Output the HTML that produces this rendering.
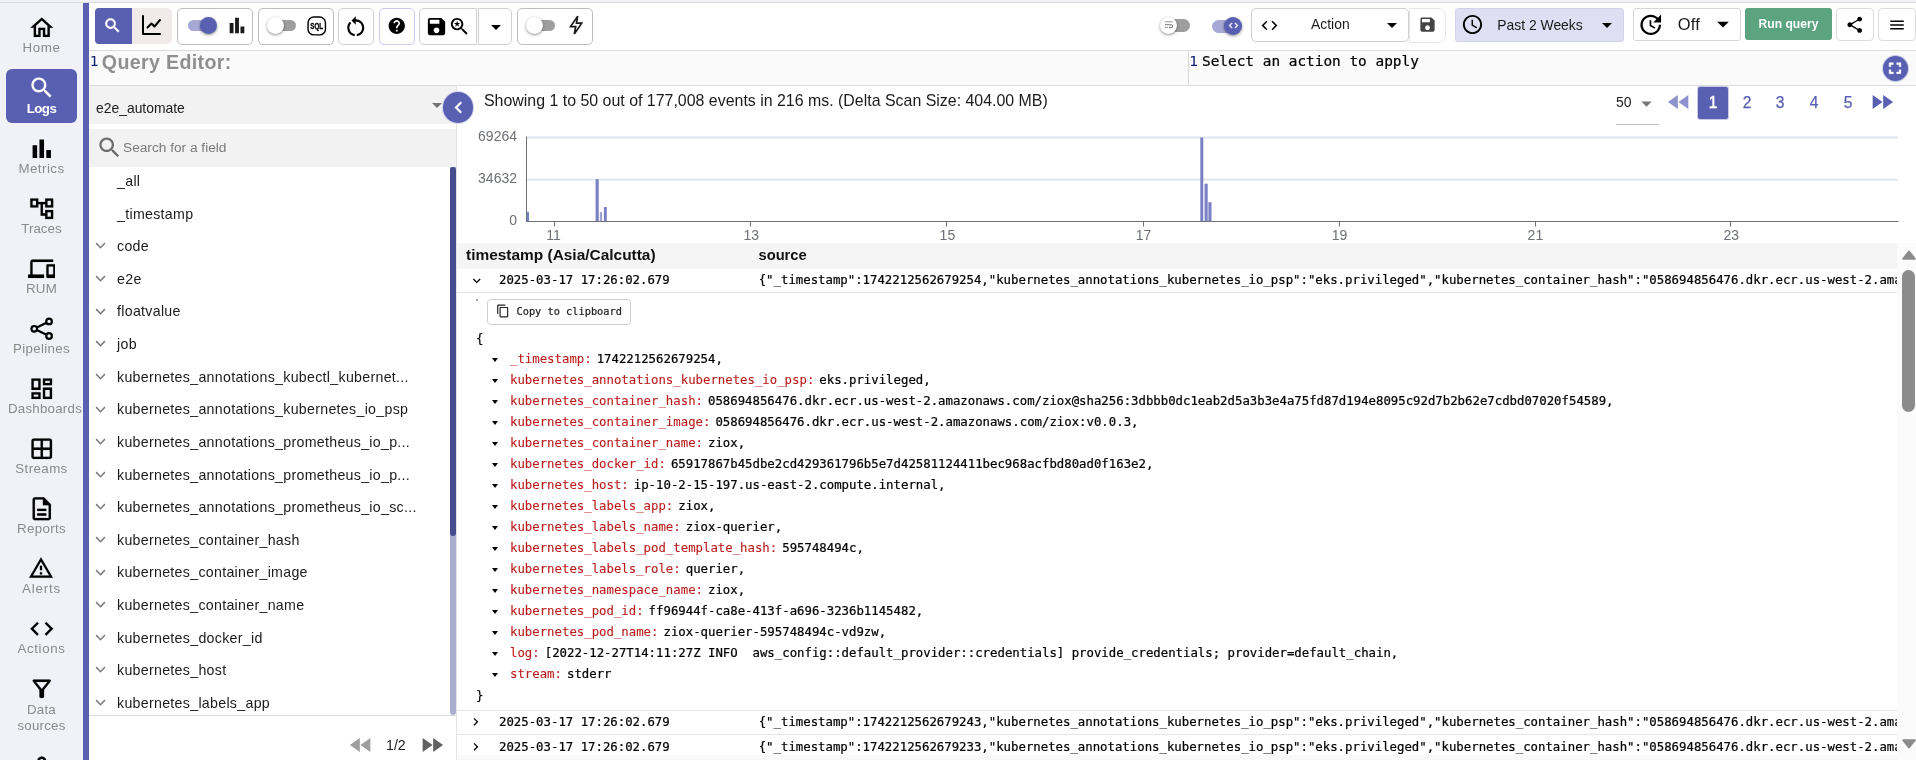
<!DOCTYPE html>
<html lang="en">
<head>
<meta charset="utf-8">
<title>Logs</title>
<style>
*{box-sizing:border-box;margin:0;padding:0}
html,body{width:1916px;height:760px;overflow:hidden;background:#fff}
body{font-family:"Liberation Sans",sans-serif;color:#1b1b1b;position:relative;font-size:14px;will-change:transform}
.abs{position:absolute}
svg{display:block}
#topstrip{position:absolute;left:0;top:0;width:1916px;height:3px;background:#f1f2f8;border-bottom:1px solid #dcdcdf}
/* ---------- sidebar ---------- */
#side{position:absolute;left:0;top:3px;width:83px;height:757px;background:#f1f2f8}
#rail{position:absolute;left:83px;top:3px;width:6px;height:757px;background:#5960b2}
.nav{position:absolute;left:0;width:83px;height:56px;text-align:center;color:#8a8a8a}
.nav svg{position:absolute;left:27.650px;top:-1.350px;width:27.500px;height:27.500px;fill:#000;stroke:#000;stroke-width:.12}
.nav span{position:absolute;left:0;width:83px;top:24.300px;font-size:13.300px;line-height:18px;letter-spacing:.15px}
.nav.act{left:6px;width:71px;height:54px;background:#5960b2;border-radius:6px;color:#fff}
.nav.act svg{fill:#fff;stroke:#fff;left:21.650px;top:4.850px}
.nav.act span{left:0;width:71px;top:30.900px;font-weight:bold}
/* ---------- toolbar ---------- */
#tb{position:absolute;left:89px;top:3px;width:1827px;height:48px;background:#fff;border-bottom:1px solid #dcdcdc}
.box{position:absolute;top:5px;height:37px;border:1px solid #bdbdbd;border-radius:5px;background:#fff}
.box svg{position:absolute}
.tg{position:absolute;height:11px;border-radius:5.500px;background:#9e9e9e}
.tg i{position:absolute;top:-3px;width:17px;height:17px;border-radius:50%;background:#fff;box-shadow:0 1px 3px rgba(0,0,0,.45)}
.tg.on{background:#a6a9d6}
.tg.on i{background:#5960b2}

/* ---------- editor row ---------- */
#ed{position:absolute;left:89px;top:51px;width:1827px;height:34px;background:#fafafa}
#edb{position:absolute;left:89px;top:85px;width:1827px;height:1px;background:#dcdcdc}
.ln{position:absolute;font-family:"DejaVu Sans Mono","Liberation Mono",monospace;font-size:14.420px;color:#0b216f;line-height:16px}
/* ---------- left field panel ---------- */
#lp{position:absolute;left:89px;top:86px;width:367px;height:674px;background:#fff}
#vdiv{position:absolute;left:456px;top:86px;width:1px;height:674px;background:#e4e4e4}
.frow{position:absolute;left:0;width:360px;height:20px;font-size:14.200px;line-height:20px;white-space:nowrap;color:#1b1b1b}
.frow svg{position:absolute;left:5.700px;top:5.200px;width:11px;height:9.200px;fill:none;stroke:#7a7a7a;stroke-width:1.600}
.frow span{position:absolute;left:28px;top:0;letter-spacing:.3px}
/* ---------- results ---------- */
#rp{position:absolute;left:457px;top:86px;width:1459px;height:674px;background:#fff;overflow:hidden}
.mono{font-family:"DejaVu Sans Mono","Liberation Mono",monospace;font-size:12.345px;white-space:pre;color:#000;-webkit-text-stroke:.22px}
.pg{position:absolute;top:0;height:34px;line-height:34px;font-size:15.600px;color:#5960b2;text-align:center;width:32px;-webkit-text-stroke:.25px}
.lrow{position:absolute;left:0;width:1440px;height:24px;overflow:hidden}
.lrow .ts{position:absolute;left:42px;top:0;line-height:24px}
.lrow .src{position:absolute;left:301.700px;top:0;line-height:24px}
.jr{position:absolute;left:35px;height:21px;line-height:21px}
.jr b{font-weight:normal;color:#bb1e1e;-webkit-text-stroke:.12px}
.jr i{font-style:normal;margin-left:5px}
.jr:before{content:"";position:absolute;left:0;top:9px;border-left:3px solid transparent;border-right:3px solid transparent;border-top:4px solid #000}
.jr b,.jr i{position:relative;left:18px}
</style>
</head>
<body>
<div id="topstrip"></div>
<div id="side">
  <div class="nav" style="top:12.20px"><svg viewBox="0 0 24 24"><path d="M12 5.69l5 4.5V18h-2v-6H9v6H7v-7.81l5-4.5M12 3L2 12h3v8h6v-6h2v6h6v-8h3L12 3z"/></svg><span style="letter-spacing:0.60px">Home</span></div>
  <div class="nav act" style="top:66.1px"><svg viewBox="0 0 24 24"><path d="M15.5 14h-.79l-.28-.27C15.41 12.59 16 11.11 16 9.5 16 5.91 13.09 3 9.5 3S3 5.91 3 9.5 5.91 16 9.5 16c1.61 0 3.09-.59 4.23-1.57l.27.28v.79l5 4.99L20.49 19l-4.99-5zm-6 0C7.01 14 5 11.99 5 9.5S7.01 5 9.5 5 14 7.01 14 9.5 11.99 14 9.5 14z"/></svg><span style="letter-spacing:-0.55px">Logs</span></div>
  <div class="nav" style="top:133.05px"><svg viewBox="0 0 24 24"><path stroke="none" d="M4 9h4v11H4zm12 4h4v7h-4zm-6-9h4v16h-4z"/></svg><span style="letter-spacing:0.45px">Metrics</span></div>
  <div class="nav" style="top:193.05px"><svg viewBox="0 0 24 24"><path d="M22 11V3h-7v3H9V3H2v8h7V8h2v10h4v3h7v-8h-7v3h-2V8h2v3h7zM7 9H4V5h3v4zm10 6h3v4h-3v-4zm0-10h3v4h-3V5z"/></svg><span style="letter-spacing:0.05px">Traces</span></div>
  <div class="nav" style="top:253.05px"><svg viewBox="0 0 24 24"><path d="M4 6h18V4H4c-1.1 0-2 .9-2 2v11H0v3h14v-3H4V6zm19 2h-6c-.55 0-1 .45-1 1v10c0 .55.45 1 1 1h6c.55 0 1-.45 1-1V9c0-.55-.45-1-1-1zm-1 9h-4v-7h4v7z"/></svg><span style="letter-spacing:0.20px">RUM</span></div>
  <div class="nav" style="top:313.05px"><svg viewBox="0 0 27.500 27.500" style="fill:none;stroke:#000;stroke-width:2.200"><circle cx="21.050" cy="6.400" r="2.800"/><circle cx="6.250" cy="13.800" r="2.800"/><circle cx="21.050" cy="21" r="2.800"/><path d="M8.800 12.500L18.500 7.700M8.800 15.100L18.500 19.700"/></svg><span style="letter-spacing:0.35px">Pipelines</span></div>
  <div class="nav" style="top:373.05px"><svg viewBox="0 0 24 24"><path d="M19 5v2h-4V5h4M9 5v6H5V5h4m10 8v6h-4v-6h4M9 17v2H5v-2h4M21 3h-8v6h8V3zM11 3H3v10h8V3zm10 8h-8v10h8V11zm-10 4H3v6h8v-6z"/></svg><span style="left:3.500px;letter-spacing:.25px">Dashboards</span></div>
  <div class="nav" style="top:433.05px"><svg viewBox="0 0 24 24"><path d="M19 3H5c-1.100 0-2 .9-2 2v14c0 1.100.9 2 2 2h14c1.100 0 2-.9 2-2V5c0-1.100-.9-2-2-2zm0 8h-6V5h6v6zm-8-6v6H5V5h6zm-6 8h6v6H5v-6zm8 6v-6h6v6h-6z"/></svg><span style="letter-spacing:0.40px">Streams</span></div>
  <div class="nav" style="top:493.05px"><svg viewBox="0 0 24 24"><path d="M8 16h8v2H8zm0-4h8v2H8zm6-10H6c-1.1 0-2 .9-2 2v16c0 1.1.89 2 1.99 2H18c1.1 0 2-.9 2-2V8l-6-6zm4 18H6V4h7v5h5v11z"/></svg><span style="letter-spacing:0.35px">Reports</span></div>
  <div class="nav" style="top:553.05px"><svg viewBox="0 0 24 24" style="left:28.400px;top:-0.600px;width:26px;height:26px"><path d="M12 5.990L19.530 19H4.470L12 5.990M12 2L1 21h22L12 2zm1 14h-2v2h2v-2zm0-6h-2v4h2v-4z"/></svg><span style="letter-spacing:0.80px">Alerts</span></div>
  <div class="nav" style="top:613.05px"><svg viewBox="0 0 24 24"><path d="M9.4 16.6L4.8 12l4.6-4.6L8 6l-6 6 6 6 1.4-1.4zm5.2 0l4.6-4.6-4.6-4.6L16 6l6 6-6 6-1.4-1.4z"/></svg><span style="letter-spacing:0.65px">Actions</span></div>
  <div class="nav" style="top:673.05px"><svg viewBox="0 0 24 24"><path d="M7 6h10l-5.01 6.3L7 6zm-2.75-.39C6.27 8.2 10 13 10 13v6c0 .55.45 1 1 1h2c.55 0 1-.45 1-1v-6s3.72-4.8 5.74-7.39c.51-.66.04-1.61-.79-1.61H5.04c-.83 0-1.3.95-.79 1.61z"/></svg><span style="line-height:16px;top:26.100px;letter-spacing:.2px">Data<br>sources</span></div>
  <div class="nav" style="top:750.80px"><svg viewBox="0 0 24 24"><path d="M12 6c1.1 0 2 .9 2 2s-.9 2-2 2-2-.9-2-2 .9-2 2-2m0 10c2.7 0 5.8 1.29 6 2H6c.23-.72 3.31-2 6-2m0-12C9.79 4 8 5.790 8 8s1.79 4 4 4 4-1.79 4-4-1.79-4-4-4zm0 10c-2.67 0-8 1.34-8 4v2h16v-2c0-2.660-5.33-4-8-4z"/></svg></div>
</div>
<div id="rail"></div>

<div id="tb">
  <!-- search / visualize toggle -->
  <div class="abs" style="left:6px;top:5px;width:37px;height:36px;background:#5960b2;border-radius:4px 0 0 4px"><svg viewBox="0 0 24 24" style="position:absolute;left:8.300px;top:8px;width:19px;height:19px;fill:#fff;stroke:#fff;stroke-width:.7"><path d="M15.5 14h-.79l-.28-.27C15.41 12.59 16 11.11 16 9.5 16 5.91 13.09 3 9.500 3S3 5.91 3 9.5 5.91 16 9.5 16c1.61 0 3.09-.59 4.23-1.57l.27.28v.79l5 4.99L20.49 19l-4.99-5zm-6 0C7.01 14 5 11.99 5 9.5S7.01 5 9.5 5 14 7.01 14 9.5 11.99 14 9.5 14z"/></svg></div>
  <div class="abs" style="left:43px;top:5px;width:40px;height:36px;background:#f0eaea;border-radius:0 5px 5px 0"><svg viewBox="0 0 24 24" style="position:absolute;left:8px;top:5.400px;width:24px;height:24px;fill:none;stroke:#000;stroke-width:2;stroke-linecap:round;stroke-linejoin:round"><path d="M3 3v18h17"/><path d="M7.500 14.500l4-4 3 3 5.500-6.500"/></svg></div>
  <!-- histogram toggle -->
  <div class="box" style="left:88px;width:76px">
    <div class="tg on" style="left:10px;top:11px;width:28px"><i style="right:-1px"></i></div>
    <svg viewBox="0 0 24 24" preserveAspectRatio="none" style="left:47.500px;top:5px;width:22px;height:23px;fill:#1b1b1b"><path d="M4 9.500h4.200V20H4zM9.900 4h4.200v16H9.900zM15.800 13H20v7h-4.200z"/></svg>
  </div>
  <!-- sql toggle -->
  <div class="box" style="left:169px;width:76px">
    <div class="tg" style="left:9px;top:11px;width:28px"><i style="left:-1px"></i></div>
    <svg viewBox="0 0 24 24" style="left:46.800px;top:5.800px;width:21.500px;height:20.800px" preserveAspectRatio="none"><rect x="2.300" y="2.300" width="19.400" height="20.600" rx="6.500" fill="none" stroke="#000" stroke-width="1.600"/><text x="12" y="16.300" text-anchor="middle" font-family="Liberation Sans, sans-serif" font-weight="bold" font-size="9.700" stroke="#000" stroke-width=".35" textLength="14.400" lengthAdjust="spacingAndGlyphs" fill="#000">SQL</text></svg>
  </div>
  <!-- reset -->
  <div class="box" style="left:249px;width:36px;border-color:#d0d0d0">
    <svg viewBox="0 0 24 24" style="left:4.450px;top:4.860px;width:25.500px;height:25.500px;fill:#000"><path d="M12 5V2L8 6l4 4V7c3.310 0 6 2.690 6 6 0 2.970-2.170 5.430-5 5.910v2.020c3.950-.49 7-3.850 7-7.930 0-4.420-3.580-8-8-8zM6 13c0-1.650.67-3.150 1.760-4.240L6.340 7.340C4.900 8.790 4 10.790 4 13c0 4.080 3.050 7.440 7 7.930v-2.020c-2.830-.48-5-2.940-5-5.910z"/></svg>
  </div>
  <!-- help -->
  <div class="box" style="left:290px;width:36px;border-color:#c9cbee">
    <svg viewBox="0 0 24 24" style="left:7.300px;top:6.850px;width:19.500px;height:19.500px;fill:#000"><path d="M12 2C6.480 2 2 6.480 2 12s4.480 10 10 10 10-4.480 10-10S17.520 2 12 2zm1 17h-2v-2h2v2zm2.070-7.750l-.9.920C13.450 12.900 13 13.500 13 15h-2v-.5c0-1.100.45-2.100 1.170-2.830l1.240-1.260c.37-.36.59-.86.59-1.410 0-1.100-.9-2-2-2s-2 .9-2 2H8c0-2.210 1.790-4 4-4s4 1.790 4 4c0 .88-.36 1.680-.93 2.250z"/></svg>
  </div>
  <!-- saved views -->
  <div class="box" style="left:330px;width:58px;border-color:#d0d0d0;border-radius:5px 0 0 5px">
    <svg viewBox="0 0 24 24" style="left:5.200px;top:6px;width:23px;height:23px;fill:#000"><path d="M17 3H5c-1.110 0-2 .9-2 2v14c0 1.100.89 2 2 2h14c1.100 0 2-.9 2-2V7l-4-4zm-5 16c-1.660 0-3-1.340-3-3s1.340-3 3-3 3 1.340 3 3-1.340 3-3 3zm3-10H5V5h10v4z"/></svg>
    <svg viewBox="0 0 24 24" style="left:27.850px;top:5.850px;width:23px;height:23px;fill:#000"><path d="M15.500 14h-.79l-.28-.27C15.410 12.590 16 11.110 16 9.500 16 5.910 13.090 3 9.500 3S3 5.910 3 9.500 5.910 16 9.500 16c1.610 0 3.090-.59 4.230-1.570l.27.280v.79l5 4.990L20.490 19l-4.990-5zm-6 0C7.010 14 5 11.990 5 9.500S7.010 5 9.500 5 14 7.010 14 9.500 11.990 14 9.500 14z"/><path d="M10.290 8.440L9.500 6l-.79 2.440H6.250l2.010 1.430-.77 2.370 2.010-1.460 2.010 1.460-.77-2.370 2.010-1.430z"/></svg>
  </div>
  <div class="box" style="left:389px;width:34px;border-color:#d0d0d0;border-radius:0 5px 5px 0">
    <svg viewBox="0 0 24 24" style="left:5px;top:6px;width:24px;height:24px;fill:#000"><path d="M7 10l5 5 5-5z"/></svg>
  </div>
  <!-- quick mode -->
  <div class="box" style="left:428px;width:76px">
    <div class="tg" style="left:9px;top:11px;width:28px"><i style="left:-1px"></i></div>
    <svg viewBox="0 0 24 24" style="left:45.800px;top:4.300px;width:24px;height:24px;fill:none;stroke:#1b1b1b;stroke-width:1.700;stroke-linejoin:miter"><path d="M13.700 3.200L6.500 13.600h5.200L10.300 21l7.400-10.800h-5.200z"/></svg>
  </div>

  <!-- right side -->
  <div class="tg" style="left:1072px;top:15.700px;width:29px;height:13px;border-radius:7px"><i style="left:-1px;top:-2px"></i></div>
  <svg class="abs" viewBox="0 0 24 24" style="left:1073.500px;top:15.800px;width:11.500px;height:11.500px;fill:#707070"><path d="M4 19h6v-2H4v2zM20 5H4v2h16V5zm-3 6H4v2h13.250c1.100 0 2 .9 2 2s-.9 2-2 2H15v-2l-3 3 3 3v-2h2c2.210 0 4-1.790 4-4s-1.790-4-4-4z"/></svg>
  <div class="tg on" style="left:1123px;top:16.500px;width:28px;height:13px;border-radius:7px"><i style="right:-2px;top:-2.500px;width:18px;height:18px"></i></div>
  <svg class="abs" viewBox="0 0 24 24" style="left:1138.500px;top:16.800px;width:11px;height:11px;fill:#fff;stroke:#fff;stroke-width:.8"><path d="M9.400 16.600L4.800 12l4.600-4.600L8 6l-6 6 6 6 1.400-1.400zm5.200 0l4.600-4.600-4.600-4.600L16 6l6 6-6 6-1.400-1.400z"/></svg>

  <div class="box" style="left:1162px;width:158px;height:34px;border-color:#cfcfcf">
    <svg viewBox="0 0 24 24" style="left:8px;top:7px;width:19px;height:19px;fill:#000"><path d="M9.400 16.600L4.800 12l4.600-4.600L8 6l-6 6 6 6 1.400-1.400zm5.200 0l4.600-4.600-4.600-4.600L16 6l6 6-6 6-1.400-1.400z"/></svg>
    <span class="abs" id="t_action" style="left:59px;top:7.100px;font-size:13.900px;line-height:16px">Action</span>
    <svg viewBox="0 0 24 24" style="left:128px;top:4px;width:24px;height:24px;fill:#000"><path d="M7 10l5 5 5-5z"/></svg>
  </div>
  <div class="box" style="left:1320px;width:37px;height:35px;border-color:#e6e6e6;border-radius:0 8px 8px 0">
    <svg viewBox="0 0 24 24" style="left:7.800px;top:5.800px;width:19px;height:19px;fill:#444"><path d="M17 3H5c-1.110 0-2 .9-2 2v14c0 1.100.89 2 2 2h14c1.100 0 2-.9 2-2V7l-4-4zm-5 16c-1.660 0-3-1.340-3-3s1.340-3 3-3 3 1.340 3 3-1.340 3-3 3zm3-10H5V5h10v4z"/></svg>
  </div>

  <div class="box" style="left:1366px;width:169px;height:34px;background:#dedff2;border-color:#d2d3ea;border-radius:3px">
    <svg viewBox="0 0 24 24" style="left:5.100px;top:4px;width:23px;height:23px;fill:#000"><path d="M11.990 2C6.470 2 2 6.480 2 12s4.470 10 9.990 10C17.520 22 22 17.520 22 12S17.520 2 11.990 2zM12 20c-4.420 0-8-3.580-8-8s3.580-8 8-8 8 3.580 8 8-3.580 8-8 8zm.5-13H11v6l5.250 3.150.75-1.230-4.500-2.670z"/></svg>
    <span class="abs" id="t_past" style="left:41.300px;top:7.500px;font-size:13.900px;line-height:16px">Past 2 Weeks</span>
    <svg viewBox="0 0 24 24" style="left:139px;top:4px;width:24px;height:24px;fill:#000"><path d="M7 10l5 5 5-5z"/></svg>
  </div>

  <div class="box" style="left:1544px;width:108px;height:33px;border-color:#d6d6d6;border-radius:3px">
    <svg viewBox="0 0 24 24" style="left:3.400px;top:1.700px;width:27.500px;height:27.500px;fill:#000"><path d="M21 10.120h-6.780l2.740-2.820c-2.730-2.700-7.150-2.800-9.880-.1-2.730 2.710-2.730 7.080 0 9.790s7.150 2.710 9.880 0C18.320 15.650 19 14.080 19 12.100h2c0 1.980-.88 4.550-2.640 6.290-3.510 3.480-9.210 3.480-12.720 0-3.500-3.470-3.530-9.110-.02-12.580s9.140-3.470 12.650 0L21 3v7.120zM12.500 8v4.250l3.500 2.080-.72 1.210L11 13V8h1.500z"/></svg>
    <span class="abs" id="t_off" style="left:43.700px;top:6.100px;font-size:16.500px;letter-spacing:.2px;line-height:18px">Off</span>
    <svg viewBox="0 0 24 24" style="left:74.700px;top:0.900px;width:28px;height:28px;fill:#000"><path d="M7 10l5 5 5-5z"/></svg>
  </div>

  <div class="abs" style="left:1656px;top:5px;width:87px;height:32px;background:#5ca380;border-radius:3px;color:#fff;font-weight:bold;font-size:12.100px;line-height:32px;text-align:center" id="t_run">Run query</div>

  <div class="box" style="left:1747px;width:38px;height:33px;border-color:#dcdcdc;border-radius:4px">
    <svg viewBox="0 0 24 24" style="left:8.300px;top:5.700px;width:19.500px;height:19.500px;fill:#000"><path d="M18 16.080c-.76 0-1.440.3-1.960.77L8.910 12.700c.05-.23.09-.46.09-.7s-.04-.47-.09-.7l7.050-4.110c.54.5 1.250.81 2.040.81 1.660 0 3-1.340 3-3s-1.340-3-3-3-3 1.340-3 3c0 .24.04.47.09.7L8.040 9.810C7.500 9.310 6.790 9 6 9c-1.660 0-3 1.340-3 3s1.340 3 3 3c.79 0 1.500-.31 2.040-.81l7.120 4.160c-.05.21-.08.43-.08.65 0 1.610 1.310 2.920 2.920 2.920 1.610 0 2.920-1.310 2.920-2.920s-1.310-2.920-2.920-2.920z"/></svg>
  </div>
  <div class="box" style="left:1789px;width:38px;height:33px;border-color:#dcdcdc;border-radius:4px">
    <svg viewBox="0 0 24 24" style="left:9px;top:7px;width:18px;height:18px;fill:#000"><path d="M3 18h18v-2H3v2zm0-5h18v-2H3v2zm0-7v2h18V6H3z"/></svg>
  </div>
</div>

<div id="ed">
  <span class="ln" style="left:0.800px;top:2.300px">1</span>
  <span class="abs" id="t_qe" style="left:12.800px;top:-0.200px;font-size:19.600px;letter-spacing:.35px;line-height:22px;font-weight:bold;color:#8f8f8f;white-space:nowrap">Query Editor:</span>
  <div class="abs" style="left:1099px;top:0;width:1px;height:34px;background:#d8d8d8"></div>
  <span class="ln" style="left:1100.300px;top:2.300px">1</span>
  <span class="abs mono" id="t_sel" style="left:1113px;top:2.300px;font-family:'DejaVu Sans Mono','Liberation Mono',monospace;font-size:14.420px;line-height:16px;color:#000">Select an action to apply</span>
  <div class="abs" style="left:1794px;top:4.700px;width:25px;height:25px;border-radius:50%;background:#5960b2;box-shadow:0 0 0 1px #c9cbe6"><svg viewBox="0 0 24 24" preserveAspectRatio="none" style="position:absolute;left:1.900px;top:3.300px;width:20px;height:18.500px;fill:#fff;stroke:#fff;stroke-width:.6"><path d="M7 14H5v5h5v-2H7v-3zm-2-4h2V7h3V5H5v5zm12 7h-3v2h5v-5h-2v3zM14 5v2h3v3h2V5h-5z"/></svg></div>
</div>
<div id="edb"></div>

<div id="lp">
  <div class="abs" style="left:0;top:0;width:367px;height:38px;background:#f2f2f2"></div>
  <span class="abs" id="t_stream" style="left:7px;top:12.500px;font-size:13.900px;line-height:18px;white-space:nowrap">e2e_automate</span>
  <svg class="abs" viewBox="0 0 24 24" style="left:336px;top:7px;width:24px;height:24px;fill:#757575"><path d="M7 10l5 5 5-5z"/></svg>
  <div class="abs" style="left:0;top:43px;width:367px;height:38px;background:#f2f2f2"></div>
  <svg class="abs" viewBox="0 0 24 24" style="left:7px;top:47.900px;width:27px;height:27px;fill:#6b6b6b"><path d="M15.500 14h-.79l-.28-.27C15.410 12.590 16 11.110 16 9.500 16 5.910 13.090 3 9.500 3S3 5.910 3 9.500 5.910 16 9.500 16c1.610 0 3.090-.59 4.230-1.570l.27.280v.79l5 4.990L20.490 19l-4.990-5zm-6 0C7.010 14 5 11.990 5 9.500S7.010 5 9.500 5 14 7.010 14 9.500 11.990 14 9.500 14z"/></svg>
  <span class="abs" id="t_search" style="left:34px;top:52.800px;font-size:13.700px;line-height:18px;color:#7b7b7b;white-space:nowrap">Search for a field</span>
  <div class="frow" style="top:85.01px"><span>_all</span></div>
  <div class="frow" style="top:117.63px"><span>_timestamp</span></div>
  <div class="frow" style="top:150.25px"><svg viewBox="0 0 12 10"><path d="M1.200 2.300L6 7.300l4.800-5"/></svg><span>code</span></div>
  <div class="frow" style="top:182.87px"><svg viewBox="0 0 12 10"><path d="M1.200 2.300L6 7.300l4.800-5"/></svg><span>e2e</span></div>
  <div class="frow" style="top:215.49px"><svg viewBox="0 0 12 10"><path d="M1.200 2.300L6 7.300l4.800-5"/></svg><span>floatvalue</span></div>
  <div class="frow" style="top:248.11px"><svg viewBox="0 0 12 10"><path d="M1.200 2.300L6 7.300l4.800-5"/></svg><span>job</span></div>
  <div class="frow" style="top:280.73px"><svg viewBox="0 0 12 10"><path d="M1.200 2.300L6 7.300l4.800-5"/></svg><span>kubernetes_annotations_kubectl_kubernet...</span></div>
  <div class="frow" style="top:313.35px"><svg viewBox="0 0 12 10"><path d="M1.200 2.300L6 7.300l4.800-5"/></svg><span>kubernetes_annotations_kubernetes_io_psp</span></div>
  <div class="frow" style="top:345.97px"><svg viewBox="0 0 12 10"><path d="M1.200 2.300L6 7.300l4.800-5"/></svg><span>kubernetes_annotations_prometheus_io_p...</span></div>
  <div class="frow" style="top:378.59px"><svg viewBox="0 0 12 10"><path d="M1.200 2.300L6 7.300l4.800-5"/></svg><span>kubernetes_annotations_prometheus_io_p...</span></div>
  <div class="frow" style="top:411.21px"><svg viewBox="0 0 12 10"><path d="M1.200 2.300L6 7.300l4.800-5"/></svg><span>kubernetes_annotations_prometheus_io_sc...</span></div>
  <div class="frow" style="top:443.83px"><svg viewBox="0 0 12 10"><path d="M1.200 2.300L6 7.300l4.800-5"/></svg><span>kubernetes_container_hash</span></div>
  <div class="frow" style="top:476.45px"><svg viewBox="0 0 12 10"><path d="M1.200 2.300L6 7.300l4.800-5"/></svg><span>kubernetes_container_image</span></div>
  <div class="frow" style="top:509.07px"><svg viewBox="0 0 12 10"><path d="M1.200 2.300L6 7.300l4.800-5"/></svg><span>kubernetes_container_name</span></div>
  <div class="frow" style="top:541.69px"><svg viewBox="0 0 12 10"><path d="M1.200 2.300L6 7.300l4.800-5"/></svg><span>kubernetes_docker_id</span></div>
  <div class="frow" style="top:574.31px"><svg viewBox="0 0 12 10"><path d="M1.200 2.300L6 7.300l4.800-5"/></svg><span>kubernetes_host</span></div>
  <div class="frow" style="top:606.93px"><svg viewBox="0 0 12 10"><path d="M1.200 2.300L6 7.300l4.800-5"/></svg><span>kubernetes_labels_app</span></div>
  <div class="abs" style="left:361px;top:81px;width:6px;height:548px;background:#acaed1;border-radius:0 0 3px 3px"></div>
  <div class="abs" style="left:361px;top:81px;width:6px;height:369px;background:#474c8e;border-radius:3px"></div>
  <div class="abs" style="left:0;top:629px;width:367px;height:1px;background:#dcdcdc"></div>
  <svg class="abs" viewBox="0 0 24 24" style="left:258.200px;top:645px;width:28px;height:28px;fill:#9e9e9e"><path d="M11 18V6l-8.500 6 8.500 6zm.5-6l8.500 6V6l-8.500 6z"/></svg>
  <span class="abs" id="t_12" style="left:297px;top:650px;font-size:14.200px;line-height:18px">1/2</span>
  <svg class="abs" viewBox="0 0 24 24" style="left:329px;top:645px;width:28px;height:28px;fill:#616161"><path d="M4 18l8.500-6L4 6v12zm9-12v12l8.500-6L13 6z"/></svg>
</div>
<div id="vdiv"></div>

<div id="rp">
  <span class="abs" id="t_show" style="left:27px;top:5px;font-size:15.930px;line-height:20px;white-space:nowrap;color:#1b1b1b">Showing 1 to 50 out of 177,008 events in 216 ms. (Delta Scan Size: 404.00 MB)</span>
  <!-- pagination -->
  <span class="abs" id="t_50" style="left:1159px;top:7px;font-size:14px;line-height:18px">50</span>
  <svg class="abs" viewBox="0 0 24 24" style="left:1176.500px;top:5px;width:25px;height:25px;fill:#757575"><path d="M7 10l5 5 5-5z"/></svg>
  <div class="abs" style="left:1159px;top:38px;width:43px;height:1px;background:#c2c2c2"></div>
  <svg class="abs" viewBox="0 0 24 24" style="left:1208px;top:2px;width:28px;height:28px;fill:#8d92cc"><path d="M11 18V6l-8.500 6 8.500 6zm.5-6l8.500 6V6l-8.500 6z"/></svg>
  <div class="pg" style="left:1241px;width:30px;background:#5960b2;color:#fff;border-radius:2px;box-shadow:0 0 0 1px #c9cbe6;top:1px;height:32px;line-height:32px;-webkit-text-stroke:.45px">1</div>
  <div class="pg" style="left:1274px">2</div>
  <div class="pg" style="left:1307px">3</div>
  <div class="pg" style="left:1341px">4</div>
  <div class="pg" style="left:1375px">5</div>
  <svg class="abs" viewBox="0 0 24 24" style="left:1411px;top:2px;width:28px;height:28px;fill:#5960b2"><path d="M4 18l8.500-6L4 6v12zm9-12v12l8.500-6L13 6z"/></svg>

  <!-- histogram -->
  <svg class="abs" style="left:0;top:40px;width:1459px;height:116px" viewBox="0 0 1459 116">
    <g font-family="Liberation Sans, sans-serif" font-size="14" fill="#6e7079">
      <text x="60" y="15" text-anchor="end">69264</text>
      <text x="60" y="57" text-anchor="end">34632</text>
      <text x="60" y="99" text-anchor="end">0</text>
      <text x="96.600" y="113.600" text-anchor="middle">11</text>
      <text x="294.300" y="113.600" text-anchor="middle">13</text>
      <text x="490.400" y="113.600" text-anchor="middle">15</text>
      <text x="686.500" y="113.600" text-anchor="middle">17</text>
      <text x="882.500" y="113.600" text-anchor="middle">19</text>
      <text x="1078.400" y="113.600" text-anchor="middle">21</text>
      <text x="1274.300" y="113.600" text-anchor="middle">23</text>
    </g>
    <g stroke="#dfe4f0" stroke-width="1.800"><path d="M69 11.500H1441M69 53.700H1441"/></g>
    <g fill="#7a80c4">
      <rect x="69.500" y="85.800" width="2.500" height="10"/>
      <rect x="138.600" y="53.200" width="3.100" height="42.500"/>
      <rect x="142.800" y="86.100" width="2.300" height="9.600" fill="#9ea3d4"/>
      <rect x="146.900" y="81" width="2.900" height="14.700"/>
      <rect x="743.300" y="11.600" width="3" height="84"/>
      <rect x="747.600" y="57.700" width="3.100" height="38"/>
      <rect x="751.400" y="76.200" width="3.100" height="19.500"/>
    </g>
    <g stroke="#6e7079" stroke-width="1" fill="none"><path d="M69.500 10.500V96M69 95.500H1441.500M97.500 95.500v5M293.500 95.500v5M489.500 95.500v5M686.500 95.500v5M882.500 95.500v5M1078.500 95.500v5M1273.500 95.500v5"/></g>
  </svg>

  <!-- table header -->
  <div class="abs" style="left:0;top:157px;width:1440px;height:26px;background:#f5f5f5"></div>
  <span class="abs" id="t_th1" style="left:9px;top:159px;font-size:15.450px;line-height:20px;font-weight:bold;white-space:nowrap;color:#111">timestamp (Asia/Calcutta)</span>
  <span class="abs" id="t_th2" style="left:301.500px;top:159px;font-size:14.700px;line-height:20px;font-weight:bold;white-space:nowrap;color:#111">source</span>

  <!-- row 1 (expanded) -->
  <div class="lrow" style="top:182px">
    <svg class="abs" viewBox="0 0 24 24" style="left:11.850px;top:4.860px;width:15.500px;height:15.500px;fill:#000"><path d="M16.590 8.590L12 13.170 7.410 8.590 6 10l6 6 6-6z"/></svg>
    <span class="ts mono">2025-03-17 17:26:02.679</span>
    <span class="src mono">{"_timestamp":1742212562679254,"kubernetes_annotations_kubernetes_io_psp":"eks.privileged","kubernetes_container_hash":"058694856476.dkr.ecr.us-west-2.amazonaws.com/ziox@sha256:3dbbb0dc1eab2d5a3b3e4a75fd87d194e8095c92d7b2b62e7cdbd07020f54589","kubernetes_container_image":"058694856476.dkr.ecr.us-west-2.amazonaws.com/ziox:v0.0.3"}</span>
  </div>
  <div class="abs" style="left:0;top:206px;width:1440px;height:1px;background:#e2e3ec"></div>
  <div class="abs" style="left:18.900px;top:213.200px;width:2px;height:2px;border-radius:50%;background:#8a8a8a"></div>
  <div class="abs" style="left:30px;top:213px;width:144px;height:26px;border:1px solid #cfcfcf;border-radius:4px">
    <svg class="abs" viewBox="0 0 24 24" style="left:8px;top:4px;width:14px;height:14px;fill:#222"><path d="M16 1H4c-1.100 0-2 .9-2 2v14h2V3h12V1zm3 4H8c-1.100 0-2 .9-2 2v14c0 1.100.9 2 2 2h11c1.100 0 2-.9 2-2V7c0-1.100-.9-2-2-2zm0 16H8V7h11v14z"/></svg>
    <span class="abs mono" id="t_copy" style="left:28.500px;top:3.200px;font-size:10.300px;line-height:16px;color:#222">Copy to clipboard</span>
  </div>
  <span class="abs mono" style="left:19px;top:243px;line-height:21px">{</span>
  <div class="jr mono" style="top:262.5px"><b>_timestamp:</b><i>1742212562679254,</i></div>
  <div class="jr mono" style="top:283.5px"><b>kubernetes_annotations_kubernetes_io_psp:</b><i>eks.privileged,</i></div>
  <div class="jr mono" style="top:304.5px"><b>kubernetes_container_hash:</b><i>058694856476.dkr.ecr.us-west-2.amazonaws.com/ziox@sha256:3dbbb0dc1eab2d5a3b3e4a75fd87d194e8095c92d7b2b62e7cdbd07020f54589,</i></div>
  <div class="jr mono" style="top:325.5px"><b>kubernetes_container_image:</b><i>058694856476.dkr.ecr.us-west-2.amazonaws.com/ziox:v0.0.3,</i></div>
  <div class="jr mono" style="top:346.5px"><b>kubernetes_container_name:</b><i>ziox,</i></div>
  <div class="jr mono" style="top:367.5px"><b>kubernetes_docker_id:</b><i>65917867b45dbe2cd429361796b5e7d42581124411bec968acfbd80ad0f163e2,</i></div>
  <div class="jr mono" style="top:388.5px"><b>kubernetes_host:</b><i>ip-10-2-15-197.us-east-2.compute.internal,</i></div>
  <div class="jr mono" style="top:409.5px"><b>kubernetes_labels_app:</b><i>ziox,</i></div>
  <div class="jr mono" style="top:430.5px"><b>kubernetes_labels_name:</b><i>ziox-querier,</i></div>
  <div class="jr mono" style="top:451.5px"><b>kubernetes_labels_pod_template_hash:</b><i>595748494c,</i></div>
  <div class="jr mono" style="top:472.5px"><b>kubernetes_labels_role:</b><i>querier,</i></div>
  <div class="jr mono" style="top:493.5px"><b>kubernetes_namespace_name:</b><i>ziox,</i></div>
  <div class="jr mono" style="top:514.5px"><b>kubernetes_pod_id:</b><i>ff96944f-ca8e-413f-a696-3236b1145482,</i></div>
  <div class="jr mono" style="top:535.5px"><b>kubernetes_pod_name:</b><i>ziox-querier-595748494c-vd9zw,</i></div>
  <div class="jr mono" style="top:556.5px"><b>log:</b><i>[2022-12-27T14:11:27Z INFO  aws_config::default_provider::credentials] provide_credentials; provider=default_chain,</i></div>
  <div class="jr mono" style="top:577.5px"><b>stream:</b><i>stderr</i></div>
  <span class="abs mono" style="left:19px;top:599.500px;line-height:21px">}</span>

  <!-- rows 2,3 -->
  <div class="abs" style="left:0;top:624px;width:1440px;height:1px;background:#e4e5ee"></div>
  <div class="lrow" style="top:624px">
    <svg class="abs" viewBox="0 0 24 24" style="left:11.360px;top:4.250px;width:15.500px;height:15.500px;fill:#000"><path d="M10 6L8.590 7.410 13.170 12l-4.580 4.590L10 18l6-6z"/></svg>
    <span class="ts mono">2025-03-17 17:26:02.679</span>
    <span class="src mono">{"_timestamp":1742212562679243,"kubernetes_annotations_kubernetes_io_psp":"eks.privileged","kubernetes_container_hash":"058694856476.dkr.ecr.us-west-2.amazonaws.com/ziox@sha256:3dbbb0dc1eab2d5a3b3e4a75fd87d194e8095c92d7b2b62e7cdbd07020f54589","kubernetes_container_image":"058694856476.dkr.ecr.us-west-2.amazonaws.com/ziox:v0.0.3"}</span>
  </div>
  <div class="abs" style="left:0;top:648.200px;width:1440px;height:1px;background:#e5e6ee"></div>
  <div class="lrow" style="top:649px">
    <svg class="abs" viewBox="0 0 24 24" style="left:11.360px;top:4.250px;width:15.500px;height:15.500px;fill:#000"><path d="M10 6L8.590 7.410 13.170 12l-4.580 4.590L10 18l6-6z"/></svg>
    <span class="ts mono">2025-03-17 17:26:02.679</span>
    <span class="src mono">{"_timestamp":1742212562679233,"kubernetes_annotations_kubernetes_io_psp":"eks.privileged","kubernetes_container_hash":"058694856476.dkr.ecr.us-west-2.amazonaws.com/ziox@sha256:3dbbb0dc1eab2d5a3b3e4a75fd87d194e8095c92d7b2b62e7cdbd07020f54589","kubernetes_container_image":"058694856476.dkr.ecr.us-west-2.amazonaws.com/ziox:v0.0.3"}</span>
  </div>
  <div class="abs" style="left:0;top:669px;width:1440px;height:5px;background:#f9f9f9"></div>

  <!-- scrollbar -->
  <div class="abs" style="left:1440px;top:157px;width:19px;height:517px;background:#fbfbfb"></div>
  <svg class="abs" viewBox="0 0 14 10" style="left:1444.500px;top:164px;width:14px;height:10px;fill:#8b8b8b;stroke:#8b8b8b;stroke-width:2;stroke-linejoin:round"><path d="M7 1.500L12.800 8.800H1.200z"/></svg>
  <div class="abs" style="left:1445px;top:184px;width:13px;height:142px;border-radius:6.500px;background:#8b8b8b"></div>
  <svg class="abs" viewBox="0 0 14 10" style="left:1444.500px;top:653px;width:14px;height:10px;fill:#8b8b8b;stroke:#8b8b8b;stroke-width:2;stroke-linejoin:round"><path d="M7 8.500L12.800 1.200H1.200z"/></svg>
</div>

<!-- collapse button -->
<div class="abs" style="left:442.900px;top:92px;width:30.600px;height:30.600px;border-radius:50%;background:#5960b2;box-shadow:0 0 0 1px #d5d6ec"><svg viewBox="0 0 24 24" style="position:absolute;left:3.700px;top:4.100px;width:23px;height:23px;fill:#fff;stroke:#fff;stroke-width:.4"><path d="M15.410 7.410L14 6l-6 6 6 6 1.410-1.410L10.830 12z"/></svg></div>
</body>
</html>
